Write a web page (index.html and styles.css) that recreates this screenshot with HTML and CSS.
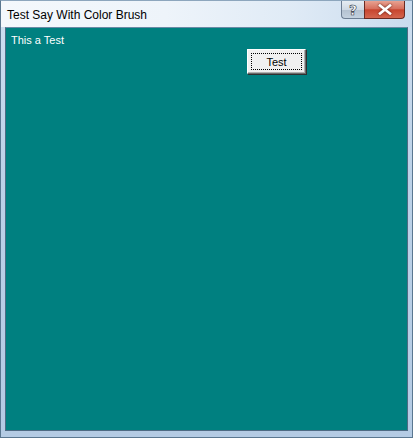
FILE: index.html
```html
<!DOCTYPE html>
<html>
<head>
<meta charset="utf-8">
<link rel="stylesheet" href="styles.css">
</head>
<body>
<div class="window">
  <div class="titlebar">
    <span class="title">Test Say With Color Brush</span>
    <div class="caption-buttons">
      <div class="cbtn help">?</div>
      <div class="cbtn close">
        <svg width="14" height="11" viewBox="0 0 14 11"><path d="M2 1.5 L12 9.5 M12 1.5 L2 9.5" stroke="#ffffff" stroke-width="2.6" stroke-linecap="square"/></svg>
      </div>
    </div>
  </div>
  <div class="client">
    <div class="label">This a Test</div>
    <div class="btn"><div class="focus">Test</div></div>
  </div>
</div>
</body>
</html>
```
FILE: styles.css
```css
html, body {
  margin: 0;
  padding: 0;
  background: #b8cde3;
}
.window {
  width: 413px;
  height: 438px;
  box-sizing: border-box;
  background: linear-gradient(to bottom, #cfe0f1 0%, #bcd2e8 40%, #b4cbe4 100%);
  border: 1px solid #5a7790;
  border-top-color: #8da6bd;
  display: flex;
  flex-direction: column;
  font-family: "Liberation Sans", Arial, sans-serif;
}
.titlebar {
  height: 26px;
  display: flex;
  align-items: flex-start;
  justify-content: space-between;
  background: linear-gradient(to right, #f4f8fc 0%, #eef4fa 40%, #e0ebf6 70%, #c9dbee 100%);
}
.title {
  font-family: "Liberation Sans", Arial, sans-serif;
  font-size: 12px;
  color: #000;
  margin: 7px 0 0 6px;
}
.caption-buttons {
  display: flex;
  margin-right: 7px;
}
.cbtn {
  height: 18px;
  box-sizing: border-box;
  border: 1px solid #6d7e93;
  border-top: none;
  display: flex;
  align-items: center;
  justify-content: center;
}
.help {
  width: 23px;
  border-radius: 0 0 0 4px;
  background: linear-gradient(to bottom, #e6ecf2 0%, #cfd9e4 50%, #b3c1d0 51%, #c3d1df 100%);
  color: #fff;
  font-family: "DejaVu Sans", sans-serif;
  font-weight: bold;
  font-size: 14px;
  line-height: 14px;
  -webkit-text-stroke: 0.6px #2c3440;
  border-right: none;
}
.close {
  width: 41px;
  border-radius: 0 0 4px 0;
  border-color: #6b2a22;
  background: linear-gradient(to bottom, #e8a292 0%, #d7705e 45%, #c7452f 52%, #d4664f 100%);
}
.close svg {
  filter: drop-shadow(0 0 1px #5a1a10);
}
.client {
  flex: 1;
  margin: 0 4px 6px 4px;
  background: #008080;
  border: 1px solid #4e6b84;
  border-top-color: #6a8aa5;
  display: flex;
  flex-direction: column;
  align-items: flex-start;
}
.label {
  color: #ffffff;
  font-family: "Liberation Sans", Arial, sans-serif;
  font-size: 11px;
  margin: 6px 0 0 5px;
}
.btn {
  margin: 3px 0 0 241px;
  width: 59px;
  height: 25px;
  box-sizing: border-box;
  background: #f0f0f0;
  border: 1px solid;
  border-color: #ffffff #6a6a6a #6a6a6a #ffffff;
  box-shadow: 1px 1px 0 #303030, inset -1px -1px 0 #b0b0b0;
  padding: 3px;
}
.focus {
  height: 100%;
  box-sizing: border-box;
  border: 1px dotted #000;
  display: flex;
  align-items: center;
  justify-content: center;
  font-family: "Liberation Sans", Arial, sans-serif;
  font-size: 11px;
  color: #000;
}
```
